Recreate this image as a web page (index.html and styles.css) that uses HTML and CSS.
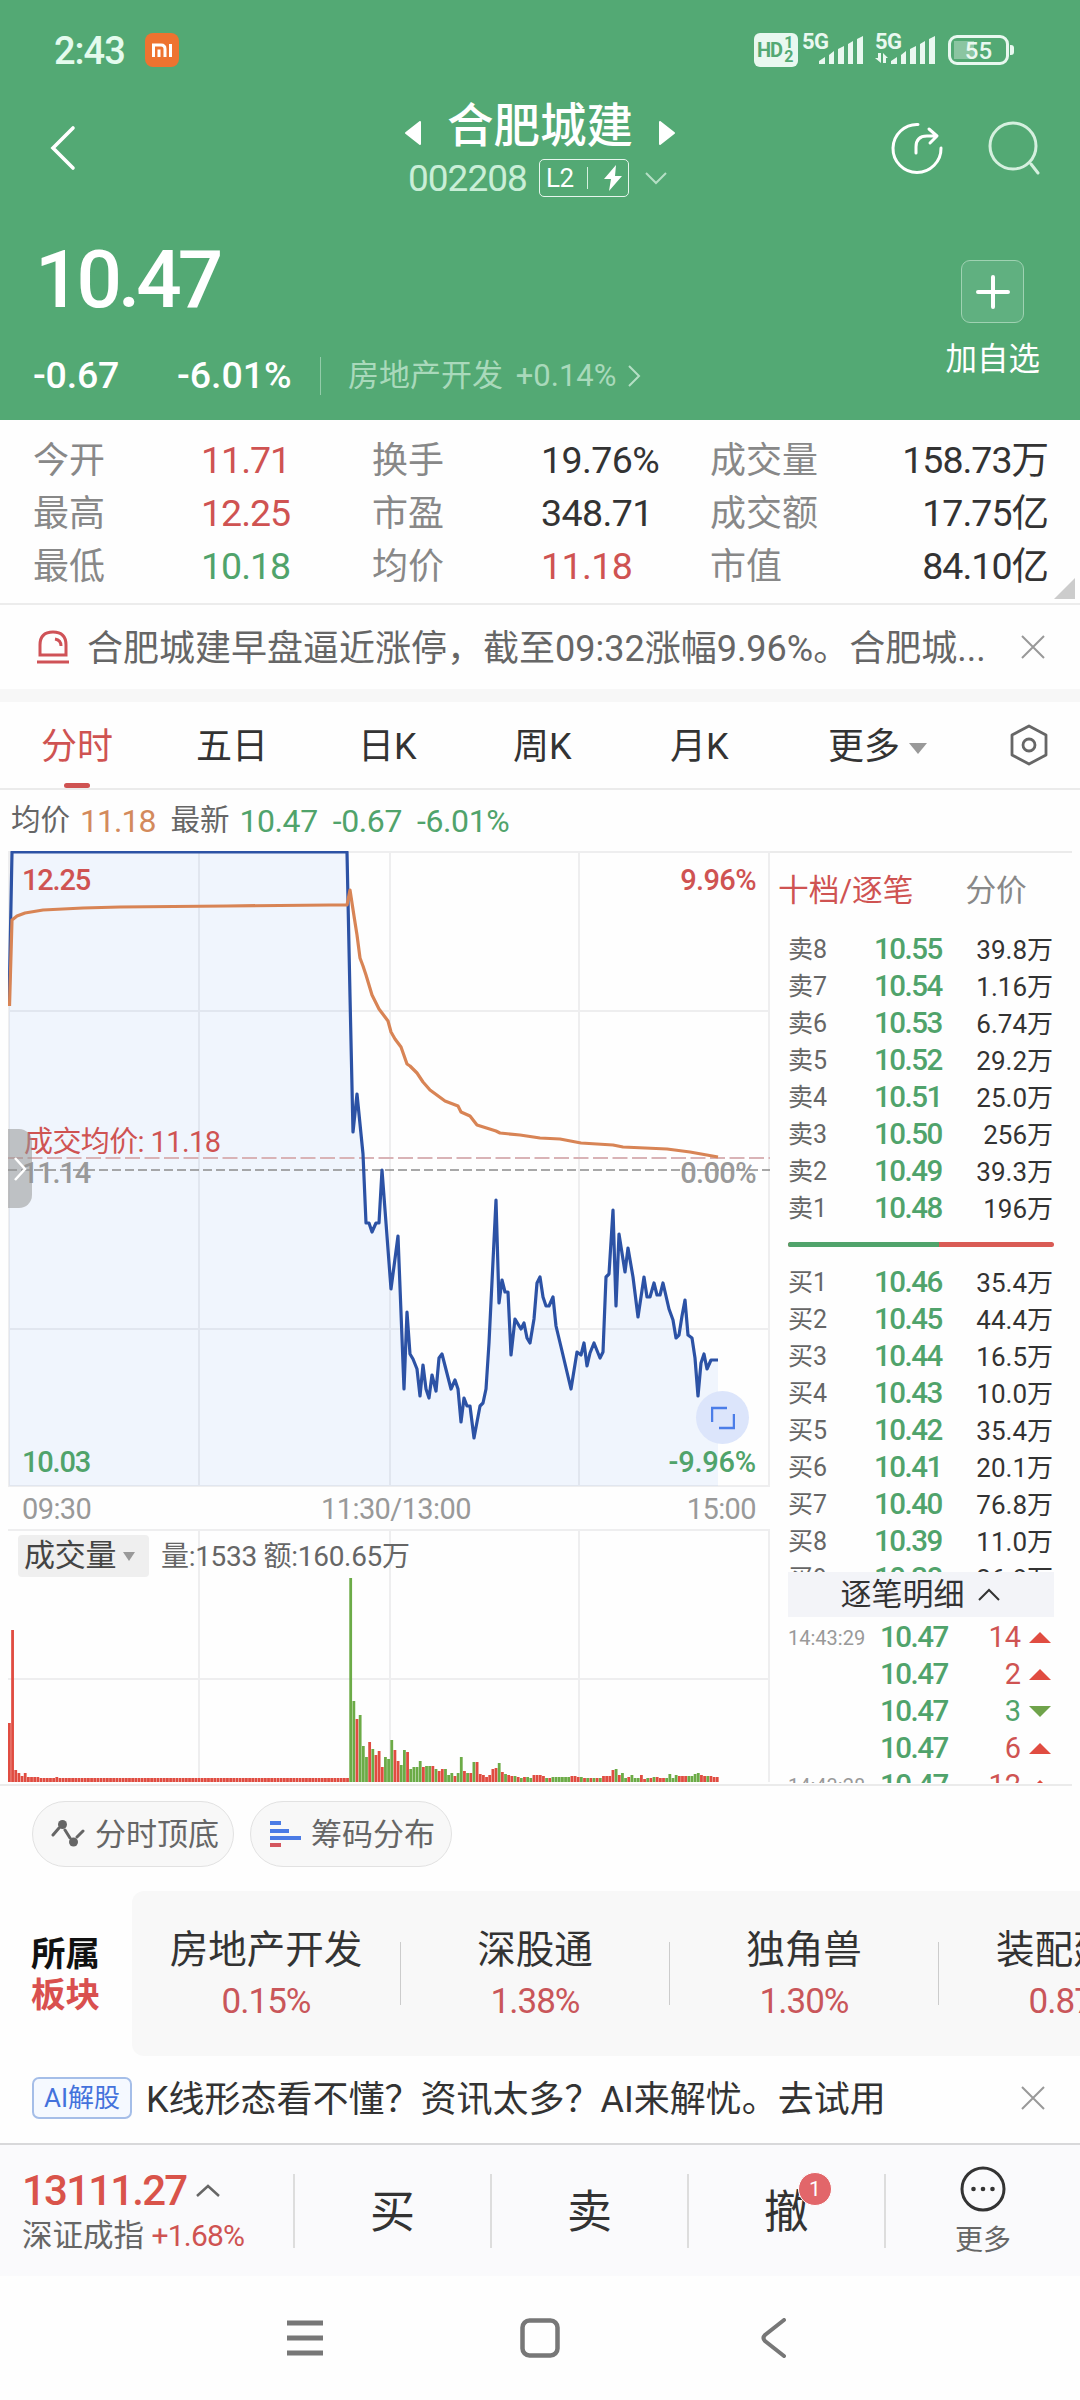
FILE: index.html
```html
<!DOCTYPE html>
<html lang="zh-CN">
<head>
    <meta charset="UTF-8">
    <meta name="viewport" content="width=device-width, initial-scale=1.0">
    <title>合肥城建 002208</title>
    <link rel="stylesheet" href="styles.css">
</head>
<body>
    <header class="header">
        <div class="status-bar">
            <span class="clock">2:43</span>
            <svg class="mi" width="34" height="34" viewBox="0 0 34 34">
                <rect width="34" height="34" rx="8" fill="#ee7330"/>
                <path d="M8.500 24V12h7.500q4 0 4 4v8M14 16.500V24M25.500 11v13" fill="none" stroke="#fff" stroke-width="3"/>
            </svg>
            <span class="hd">HD<small><i>1</i><i>2</i></small></span>
            <div class="signal">
                <b>5G</b>
                <svg width="60" height="32" viewBox="0 0 60 32">
                    <path d="M15 30v-3l6-4v7zM25 30V21l5-4v13zM34 30V15l6-3v18zM44 30V10l5-3v23zM53 30V5l6-3v28z"/>
                </svg>
            </div>
            <div class="signal signal-2">
                <b>5G</b>
                <svg width="60" height="32" viewBox="0 0 60 32">
                    <path d="M15 30v-3l6-4v7zM25 30V21l5-4v13zM34 30V15l6-3v18zM44 30V10l5-3v23zM53 30V5l6-3v28z"/>
                    <path d="M-1 24h3v-5h3v10zM7 19l5 5h-2v5H7z"/>
                </svg>
            </div>
            <div class="battery"><span>55</span></div>
        </div>

        <div class="title-bar">
            <svg class="back" width="28" height="48" viewBox="0 0 28 48"><path d="M24 4 4 24l20 20" fill="none" stroke="#fff" stroke-width="3.600" stroke-linecap="round"/></svg>
            <div class="stock">
                <div class="stock-name">
                    <svg width="16" height="24" viewBox="0 0 16 24"><path d="M15 1v22L1 12z" fill="#fff" stroke="#fff" stroke-width="2" stroke-linejoin="round"/></svg>
                    <span>合肥城建</span>
                    <svg width="16" height="24" viewBox="0 0 16 24"><path d="M1 1v22L15 12z" fill="#fff" stroke="#fff" stroke-width="2" stroke-linejoin="round"/></svg>
                </div>
                <div class="stock-code">
                    <span class="num">002208</span>
                    <span class="level">L2<i></i><svg width="18" height="26" viewBox="0 0 18 26"><path d="M12 0 0 14h7L5 26 18 11h-7z" fill="#fff"/></svg></span>
                    <svg width="22" height="14" viewBox="0 0 22 14"><path d="m1 2 10 10L21 2" fill="none" stroke="#b5dfc5" stroke-width="2"/></svg>
                </div>
            </div>
            <div class="tools">
                <svg width="54" height="54" viewBox="0 0 54 54" fill="none" stroke="#fff" stroke-width="3" stroke-linecap="round" stroke-linejoin="round">
                    <path d="M28 3.500A24 24 0 1 0 51 27M26 32v-6q0-11 11-11h9M39 8l8 7-7 7"/>
                </svg>
                <svg width="54" height="54" viewBox="0 0 54 54" fill="none" stroke="#d5f0df" stroke-width="3" stroke-linecap="round">
                    <circle cx="25" cy="25" r="23"/><path d="m43 43 7 9"/>
                </svg>
            </div>
        </div>

        <div class="quote">
            <div>
                <div class="price">10.47</div>
                <div class="change">
                    <span class="change-abs">-0.67</span>
                    <span class="change-pct">-6.01%</span>
                    <span class="industry">房地产开发 <em>+0.14%</em></span>
                    <svg width="14" height="24" viewBox="0 0 14 24"><path d="m2 2 10 10L2 22" fill="none" stroke="#b5dfc5" stroke-width="2"/></svg>
                </div>
            </div>
            <div class="add">
                <div class="add-box"><svg width="34" height="34" viewBox="0 0 34 34"><path d="M17 2v30M2 17h30" stroke="#fff" stroke-width="4" stroke-linecap="round"/></svg></div>
                <span>加自选</span>
            </div>
        </div>
    </header>

    <section class="stats">
        <span>今开</span><b class="up">11.71</b><span>换手</span><b>19.76%</b><span>成交量</span><b>158.73万</b>
        <span>最高</span><b class="up">12.25</b><span>市盈</span><b>348.71</b><span>成交额</span><b>17.75亿</b>
        <span>最低</span><b class="down">10.18</b><span>均价</span><b class="up">11.18</b><span>市值</span><b>84.10亿</b>
        <div class="corner"></div>
    </section>

    <section class="notice">
        <svg width="32" height="34" viewBox="0 0 32 34" fill="none" stroke="#cf5257" stroke-width="3">
            <path d="M3 25V15Q3 2 16 2t13 13v10zM0 32h32M18 9q6 1 6 7"/>
        </svg>
        <p>合肥城建早盘逼近涨停，截至09:32涨幅9.96%。合肥城...</p>
        <svg class="close" width="24" height="24" viewBox="0 0 24 24"><path d="m1 1 22 22M23 1 1 23" stroke="#999" stroke-width="2"/></svg>
    </section>

    <nav class="tabs">
        <a class="active">分时</a>
        <a>五日</a>
        <a>日K</a>
        <a>周K</a>
        <a>月K</a>
        <a class="tab-more">更多 <i class="caret"></i></a>
        <svg width="40" height="42" viewBox="0 0 40 42" fill="none" stroke="#666" stroke-width="2.800">
            <path d="M20 2 37 11v20L20 40 3 31V11z" stroke-linejoin="round"/><circle cx="20" cy="21" r="6"/>
        </svg>
    </nav>

    <div class="legend">
        <span>均价</span><b class="avg">11.18</b><span>最新</span><b class="down">10.47</b><b class="down">-0.67</b><b class="down">-6.01%</b>
    </div>

    <main class="market">
        <div class="charts">
            <div class="price-chart">
                <svg width="762" height="636" viewBox="0 0 762 636">
                    <path class="grid" d="M1 1h760v634H1zM191 1v634M382 1v634M571 1v634M1 160h760M1 478h760"/>
                    <polygon id="price-area" class="area"/>
                    <path class="avg-level" d="M0 307h762"/>
                    <path class="zero-level" d="M0 319h762"/>
                    <polyline id="price-line" class="line" points="1,155 4,1 339,1 342,145 345,281 349,243 355,303 358,372 361,372 364,381 368,372 371,372 374,319 383,438 390,385 396,538 399,461 402,503 405,508 409,518 412,545 415,514 418,538 421,547 424,524 428,540 431,507 434,503 443,538 447,529 450,538 453,571 456,547 459,555 462,555 466,587 472,555 475,552 478,538 481,492 488,349 491,452 494,429 497,441 500,441 503,504 507,468 513,478 516,472 519,487 522,492 526,468 529,432 532,426 535,446 538,455 541,455 545,446 548,475 554,500 563,538 569,501 573,504 576,492 579,515 582,502 586,492 592,507 595,501 598,426 601,423 605,359 608,455 611,383 617,421 620,397 625,426 630,466 636,426 639,446 642,446 646,432 649,444 652,444 655,432 661,458 665,469 668,487 671,484 674,465 677,449 680,484 684,487 687,507 690,545 693,512 696,503 699,518 703,509 710,509"/>
                    <polyline class="line line-avg" points="1.500,155 4,69 9,65 17,62 35,59 75,57 112,56 219,55 322,54 339,54 342,39 346,65 349,84 352,107 355,115 358,124 364,144 371,158 374,162 380,170 383,181 387,188 393,196 399,213 402,215 409,222 415,231 422,239 437,250 450,255 453,261 462,265 469,274 488,280 492,282 512,284 532,287 552,288 573,292 605,294 615,296 659,298 682,301 710,306"/>
                </svg>
                <span class="tag tag-high up">12.25</span>
                <span class="tag tag-high-pct up">9.96%</span>
                <span class="tag tag-avg up">成交均价: 11.18</span>
                <span class="tag tag-zero">11.14</span>
                <span class="tag tag-zero-pct">0.00%</span>
                <span class="tag tag-low down">10.03</span>
                <span class="tag tag-low-pct down">-9.96%</span>
                <div class="drawer"><svg width="14" height="26" viewBox="0 0 14 26"><path d="m2 2 10 11L2 24" fill="none" stroke="#fff" stroke-width="2.500"/></svg></div>
                <div class="expand"><svg width="24" height="24" viewBox="0 0 24 24"><path d="M1 16V2h15M8 22h15V8" fill="none" stroke="#4b7de8" stroke-width="2.500"/></svg></div>
            </div>
            <div class="times"><span>09:30</span><span>11:30/13:00</span><span>15:00</span></div>
            <div class="volume">
                <svg id="volume-bars" width="762" height="254" viewBox="0 0 762 254">
                    <path class="grid" d="M0 1h761v252M191 1v252M382 1v252M571 1v252M0 150h761"/>
                </svg>
                <div class="volume-head">
                    <span class="volume-select">成交量 <i class="caret"></i></span>
                    <span class="volume-text">量:1533 额:160.65万</span>
                </div>
            </div>
        </div>

        <aside class="book">
            <div class="book-tabs"><span class="up">十档/逐笔</span><span>分价</span></div>
            <div class="orders">
                <div class="order"><span>卖8</span><b>10.55</b><em>39.8万</em></div>
                <div class="order"><span>卖7</span><b>10.54</b><em>1.16万</em></div>
                <div class="order"><span>卖6</span><b>10.53</b><em>6.74万</em></div>
                <div class="order"><span>卖5</span><b>10.52</b><em>29.2万</em></div>
                <div class="order"><span>卖4</span><b>10.51</b><em>25.0万</em></div>
                <div class="order"><span>卖3</span><b>10.50</b><em>256万</em></div>
                <div class="order"><span>卖2</span><b>10.49</b><em>39.3万</em></div>
                <div class="order"><span>卖1</span><b>10.48</b><em>196万</em></div>
                <div class="ratio"><i></i></div>
                <div class="order"><span>买1</span><b>10.46</b><em>35.4万</em></div>
                <div class="order"><span>买2</span><b>10.45</b><em>44.4万</em></div>
                <div class="order"><span>买3</span><b>10.44</b><em>16.5万</em></div>
                <div class="order"><span>买4</span><b>10.43</b><em>10.0万</em></div>
                <div class="order"><span>买5</span><b>10.42</b><em>35.4万</em></div>
                <div class="order"><span>买6</span><b>10.41</b><em>20.1万</em></div>
                <div class="order"><span>买7</span><b>10.40</b><em>76.8万</em></div>
                <div class="order"><span>买8</span><b>10.39</b><em>11.0万</em></div>
                <div class="order"><span>买9</span><b>10.38</b><em>26.8万</em></div>
            </div>
            <div class="ticks-head">逐笔明细 <svg width="22" height="14" viewBox="0 0 22 14"><path d="m1 12 10-10 10 10" fill="none" stroke="#333" stroke-width="2"/></svg></div>
            <div class="ticks">
                <div class="tick"><span>14:43:29</span><b>10.47</b><em class="up">14</em><i class="tri-up"></i></div>
                <div class="tick"><span></span><b>10.47</b><em class="up">2</em><i class="tri-up"></i></div>
                <div class="tick"><span></span><b>10.47</b><em class="down">3</em><i class="tri-down"></i></div>
                <div class="tick"><span></span><b>10.47</b><em class="up">6</em><i class="tri-up"></i></div>
                <div class="tick"><span>14:43:28</span><b>10.47</b><em class="up">12</em><i class="tri-up"></i></div>
            </div>
        </aside>
    </main>

    <div class="pills">
        <span class="pill">
            <svg width="34" height="28" viewBox="0 0 34 28"><path d="M2 15 8 8M14 10l5 8M26 17l6-6" fill="none" stroke="#666" stroke-width="3" stroke-linecap="round"/><circle cx="11.500" cy="4.500" r="4.500" fill="#666"/><circle cx="22.500" cy="22" r="4.500" fill="#666"/></svg>
            分时顶底
        </span>
        <span class="pill">
            <svg width="32" height="28" viewBox="0 0 32 28" stroke-width="4"><path d="M1 3h11M1 11h19M1 18h31" stroke="#4b7be5"/><path d="M1 25h11" stroke="#d4565e"/></svg>
            筹码分布
        </span>
    </div>

    <section class="sectors">
        <h2>所属<br><span>板块</span></h2>
        <div class="sector-list">
            <div class="sector"><span>房地产开发</span><b>0.15%</b></div>
            <div class="sector"><span>深股通</span><b>1.38%</b></div>
            <div class="sector"><span>独角兽</span><b>1.30%</b></div>
            <div class="sector"><span>装配建筑</span><b>0.87%</b></div>
        </div>
    </section>

    <section class="ai">
        <span class="ai-tag">AI解股</span>
        <p>K线形态看不懂？资讯太多？AI来解忧。去试用</p>
        <svg class="close" width="24" height="24" viewBox="0 0 24 24"><path d="m1 1 22 22M23 1 1 23" stroke="#999" stroke-width="2"/></svg>
    </section>

    <footer class="trade-bar">
        <div class="index">
            <div class="index-value">13111.27 <svg width="24" height="14" viewBox="0 0 24 14"><path d="m1 12 11-10 11 10" fill="none" stroke="#666" stroke-width="2.500"/></svg></div>
            <div class="index-name">深证成指 <b>+1.68%</b></div>
        </div>
        <div class="action">买</div>
        <div class="action">卖</div>
        <div class="action"><span class="cancel">撤<i class="badge">1</i></span></div>
        <div class="more">
            <svg width="46" height="46" viewBox="0 0 46 46"><circle cx="23" cy="23" r="21" fill="none" stroke="#333" stroke-width="3"/><circle cx="13.500" cy="23" r="2.300" fill="#333"/><circle cx="23" cy="23" r="2.300" fill="#333"/><circle cx="32.500" cy="23" r="2.300" fill="#333"/></svg>
            <span>更多</span>
        </div>
    </footer>

    <div class="system-nav">
        <svg width="38" height="38" viewBox="0 0 38 38"><path d="M1 4h36M1 19h36M1 34h36" stroke="#777" stroke-width="5"/></svg>
        <svg width="40" height="40" viewBox="0 0 40 40"><rect x="2.500" y="2.500" width="35" height="35" rx="7" fill="none" stroke="#777" stroke-width="4.500"/></svg>
        <svg width="28" height="40" viewBox="0 0 28 40"><path d="M24 2 5 17q-3 3 0 6l19 15" fill="none" stroke="#777" stroke-width="4" stroke-linecap="round"/></svg>
    </div>

    <script>
        // Volume per minute, negative = falling minute (green)
        const open = [59, 152, 12, 9, 6, 9, 5, 5, 5, 5, 4, 4, 4, 4, 4, 5];
        const limitUp = new Array(92).fill(4);
        const afterBreak = [
            -204, -81, 63, -67, -36, -25, 40, -33, 27, 31, 15, -25, -23, -42, 32, 21, -17, -32, 30, -13,
            -15, -15, -21, 15, -16, -16, 16, -13, 11, 13, -13, -7, -9, 6, -9, -25, 11, -9, 9, -20,
            20, 8, 7, 5, 7, 13, 14, -19, 10, -8, 7, 6, -6, 5, -4, 5, -5, -4, 7, 7,
            7, 6, -4, 4, -5, -5, -5, -5, -5, -5, 6, 6, 5, -5, 4, -4, 4, -4, 4, -4,
            6, 6, 6, 12, -13, 7, -9, -4, 5, -7, -4, -4, 7, 3, -4, 4, -5, 5, 4, 4,
            -4, -8, -4, -7, 6, 6, 6, -6, -6, -8, -9, 7, 6, -6, 6, 5, 5
        ];
        const bars = document.getElementById('volume-bars');
        open.concat(limitUp, afterBreak).forEach((v, i) => {
            const rect = document.createElementNS('http://www.w3.org/2000/svg', 'rect');
            const h = Math.abs(v);
            rect.setAttribute('x', (i * 3.16).toFixed(2));
            rect.setAttribute('y', 253 - h);
            rect.setAttribute('width', 2.8);
            rect.setAttribute('height', h);
            rect.setAttribute('fill', v < 0 ? '#6cab47' : '#e04c41');
            bars.appendChild(rect);
        });

        // Fill under the price line
        const line = document.getElementById('price-line').getAttribute('points');
        document.getElementById('price-area').setAttribute('points', line + ' 710,635 1,635');
    </script>
</body>
</html>
```
FILE: styles.css
```css
* {
    box-sizing: border-box;
}
body {
    margin: 0;
    width: 1080px;
    height: 2400px;
    overflow: hidden;
    background: #fefefe;
    color: #333;
    font-family: Roboto, "Noto Sans CJK SC", sans-serif;
    line-height: 1;
}
svg {
    display: block;
    flex: none;
}
p, h2 {
    margin: 0;
}
i, em {
    font-style: normal;
}
b {
    font-weight: 400;
}
.up {
    color: #cf5352;
}
.down {
    color: #50a36b;
}

/* Header */
.header {
    height: 420px;
    background: #53a974;
    color: #fff;
}
.status-bar {
    display: flex;
    align-items: center;
    height: 100px;
    padding: 0 66px 0 54px;
}
.clock {
    width: 91px;
    padding-top: 2px;
    font-size: 38px;
    letter-spacing: -1px;
    font-weight: 500;
    color: #e4fbee;
}
.mi {
    margin-right: auto;
}
.hd {
    display: flex;
    align-items: center;
    width: 44px;
    height: 34px;
    padding-left: 3px;
    margin-right: 6px;
    border-radius: 6px;
    background: #e9f8f0;
    color: #53a974;
    font-size: 20px;
    font-weight: 700;
    letter-spacing: -1px;
}
.hd small {
    display: grid;
    margin-left: 2px;
    font-size: 16px;
    line-height: 14px;
}
.signal {
    position: relative;
    margin-right: 12px;
    fill: #e9f8f0;
}
.signal svg {
    overflow: visible;
}
.signal b {
    position: absolute;
    top: -3px;
    left: -2px;
    color: #e9f8f0;
    font-size: 22px;
    font-weight: 700;
    letter-spacing: -0.5px;
}
.signal-2 b {
    left: -1px;
}
.battery {
    position: relative;
    width: 61px;
    height: 30px;
    margin-right: 5px;
    border: 3px solid #e9f8f0;
    border-radius: 9px;
    background: linear-gradient(90deg, #8bc5a1 20px, transparent 20px) 3px 3px no-repeat;
    background-size: 48px 18px;
    color: #e9f8f0;
    font-size: 24px;
    font-weight: 500;
    line-height: 26px;
    text-align: center;
}
.battery::after {
    content: "";
    position: absolute;
    top: 7px;
    right: -8px;
    width: 4px;
    height: 10px;
    border-radius: 0 3px 3px 0;
    background: #e9f8f0;
}
.title-bar {
    display: grid;
    grid-template-columns: 160px 1fr 160px;
    height: 96px;
    padding: 0 34px 0 48px;
}
.back {
    margin: 24px 0 0 1px;
}
.stock {
    padding-right: 14px;
}
.stock-name {
    display: flex;
    align-items: center;
    justify-content: center;
    gap: 26px;
    height: 50px;
    padding-top: 2px;
    font-size: 46.5px;
    font-weight: 500;
}
.stock-name svg {
    margin-top: 13px;
}
.stock-code {
    display: flex;
    align-items: center;
    height: 37px;
    margin: 9px 0 0 200px;
}
.num {
    width: 131px;
    padding-top: 2px;
    color: #c9eed7;
    font-size: 37px;
    letter-spacing: -1px;
}
.level {
    display: flex;
    align-items: center;
    width: 90px;
    height: 38px;
    padding: 0 8px 0 6px;
    margin-right: 16px;
    border: 1.5px solid #e6f6ed;
    border-radius: 5px;
    font-size: 26px;
    letter-spacing: -0.5px;
}
.level i {
    flex: none;
    width: 1px;
    height: 22px;
    margin: 0 16px 0 13px;
    background: #d5f0df;
}
.tools {
    display: flex;
    gap: 44px;
    margin: 21px 0 0 4px;
}
.quote {
    display: flex;
    justify-content: space-between;
    padding: 0 40px 0 33px;
}
.price {
    margin: 44px 0 0 2px;
    font-size: 80px;
    font-weight: 500;
    letter-spacing: -4px;
}
.change {
    display: flex;
    align-items: center;
    height: 38px;
    margin-top: 37px;
    font-size: 37.5px;
    font-weight: 500;
}
.change-abs {
    width: 144px;
    letter-spacing: -0.2px;
}
.change-pct {
    width: 143px;
}
.industry {
    width: 307px;
    padding-left: 27px;
    border-left: 1px solid #93cca9;
    color: #a9d9bb;
    font-size: 31px;
    font-weight: 400;
    line-height: 38px;
    white-space: nowrap;
}
.industry em {
    margin-left: 5px;
}
.add {
    display: flex;
    flex-direction: column;
    align-items: center;
    font-size: 31.5px;
}
.add-box {
    display: grid;
    place-items: center;
    width: 63px;
    height: 63px;
    margin: 64px 0 21px;
    border: 1.5px solid #9fd2b2;
    border-radius: 9px;
    background: #60b080;
}

/* Key figures */
.stats {
    position: relative;
    display: grid;
    grid-template-columns: 168px 171px 169px 169px 150px 1fr;
    grid-auto-rows: 53px;
    align-items: center;
    height: 185px;
    padding: 14px 32px 0 33px;
    border-bottom: 2px solid #ececec;
    font-size: 36px;
}
.stats span {
    color: #888;
}
.stats b {
    letter-spacing: -1px;
    font-size: 37.5px;
}
.stats b:nth-of-type(3n) {
    text-align: right;
}
.stats b:nth-of-type(3n + 2) {
    letter-spacing: -0.6px;
}
.corner {
    position: absolute;
    right: 5px;
    bottom: 4px;
    width: 21px;
    height: 21px;
    background: #ccc;
    clip-path: polygon(100% 0, 100% 100%, 0 100%);
}
.notice {
    display: flex;
    align-items: center;
    height: 97px;
    padding: 0 35px 0 37px;
    border-bottom: 13px solid #f7f7f7;
    color: #666;
    font-size: 36px;
}
.notice p {
    padding-top: 3px;
    margin-left: 18px;
    white-space: nowrap;
}
.close {
    margin-left: auto;
}

/* Tabs */
.tabs {
    display: grid;
    grid-template-columns: 155px 162px 155px 157px 158px 181px 40px;
    align-items: center;
    justify-content: start;
    height: 88px;
    padding-left: 41px;
    border-bottom: 2px solid #ebebeb;
    color: #333;
    font-size: 36px;
}
.tabs a {
    position: relative;
    line-height: 90px;
    height: 86px;
    white-space: nowrap;
}
.tabs .active {
    color: #cf5352;
}
.active::after {
    content: "";
    position: absolute;
    left: 23px;
    bottom: 0;
    width: 26px;
    height: 5px;
    border-radius: 3px;
    background: #cf5352;
}
.caret {
    display: inline-block;
    border: 9px solid transparent;
    border-top: 11px solid #999;
    border-bottom: 0;
    vertical-align: 5px;
}
.legend {
    display: flex;
    align-items: center;
    height: 61px;
    padding-left: 11px;
    color: #666;
    font-size: 29.5px;
}
.legend b {
    margin: 0 15px 0 10px;
    font-size: 32px;
    letter-spacing: -1px;
}
.legend .down {
    letter-spacing: -0.4px;
}
.legend b + b {
    margin-left: 0;
}
.legend .avg {
    color: #d38a5c;
}

/* Charts */
.market {
    display: flex;
    height: 935px;
    width: 1072px;
    padding-left: 8px;
    border-bottom: 2px solid #ebebeb;
}
.charts {
    width: 762px;
}
.price-chart {
    position: relative;
    height: 636px;
}
.grid {
    fill: none;
    stroke: #eeeeef;
    stroke-width: 2;
}
.area {
    fill: rgba(100, 155, 245, 0.09);
}
.line {
    fill: none;
    stroke: #2c52a5;
    stroke-width: 3.2;
    stroke-linejoin: round;
}
.line-avg {
    stroke: #d88455;
}
.avg-level {
    stroke: #d9b3b6;
    stroke-width: 2;
    stroke-dasharray: 15 4.5;
}
.zero-level {
    stroke: #8c8c8c;
    stroke-width: 1.6;
    stroke-dasharray: 9 4;
}
.tag {
    position: absolute;
    font-size: 29px;
    font-weight: 500;
    letter-spacing: -1.2px;
}
.tag-high {
    top: 15px;
    left: 14px;
}
.tag-high-pct {
    top: 15px;
    right: 14px;
    letter-spacing: -0.6px;
}
.tag-avg {
    top: 277px;
    left: 16px;
    font-weight: 400;
    letter-spacing: -0.6px;
}
.tag-zero {
    top: 308px;
    left: 14px;
    color: #999;
}
.tag-zero-pct {
    top: 308px;
    right: 14px;
    color: #999;
    letter-spacing: -0.6px;
}
.tag-low {
    bottom: 10px;
    left: 14px;
}
.tag-low-pct {
    bottom: 10px;
    right: 14px;
    letter-spacing: -0.2px;
}
.drawer {
    position: absolute;
    top: 278px;
    left: 0;
    display: grid;
    place-items: center;
    width: 24px;
    height: 79px;
    border-radius: 0 13px 13px 0;
    background: rgba(150, 150, 150, 0.55);
}
.expand {
    position: absolute;
    right: 21px;
    bottom: 43px;
    display: grid;
    place-items: center;
    width: 53px;
    height: 53px;
    border-radius: 50%;
    background: #dce5fb;
}
.times {
    display: flex;
    justify-content: space-between;
    height: 42px;
    padding: 0 14px;
    color: #999;
    font-size: 29px;
    line-height: 44px;
    letter-spacing: -0.6px;
}
.times span:nth-child(2) {
    margin-left: 14px;
}
.volume {
    position: relative;
}
.volume-head {
    position: absolute;
    top: 6px;
    left: 10px;
    display: flex;
    align-items: center;
    gap: 12px;
    color: #666;
    font-size: 28px;
    letter-spacing: -0.3px;
}
.volume-text {
    padding-top: 2px;
}
.volume-select {
    width: 131px;
    height: 42px;
    padding-left: 6px;
    border-radius: 4px;
    background: #efefef;
    color: #444;
    font-size: 31px;
    line-height: 42px;
    white-space: nowrap;
}
.volume-select .caret {
    margin-left: -1px;
    border-width: 9px 6.5px 0;
}

/* Order book */
.book {
    flex: 1;
    padding-left: 8px;
    border-top: 2px solid #ebebeb;
}
.book-tabs {
    display: flex;
    gap: 52px;
    height: 78px;
    color: #888;
    font-size: 30.7px;
    line-height: 76px;
}
.orders {
    height: 641px;
    padding-left: 10px;
    overflow: hidden;
}
.order {
    display: grid;
    grid-template-columns: 86px 90px 89px;
    align-items: center;
    height: 37px;
    color: #666;
    font-size: 25px;
}
.order b, .tick b {
    color: #50a36b;
    font-size: 29.5px;
    font-weight: 500;
    letter-spacing: -1.5px;
}
.order em {
    color: #333;
    font-size: 26px;
    text-align: right;
    white-space: nowrap;
}
.ratio {
    display: flex;
    height: 5px;
    width: 266px;
    margin: 15px 0 17px 0;
    border-radius: 3px;
    background: #d95b55;
}
.ratio i {
    width: 151px;
    border-radius: 3px 0 0 3px;
    background: #50a36b;
}
.ticks-head {
    display: flex;
    align-items: center;
    justify-content: center;
    gap: 13px;
    width: 266px;
    height: 45px;
    padding-right: 2px;
    margin-left: 10px;
    background: #f3f4f8;
    font-size: 31px;
}
.ticks {
    height: 166px;
    padding: 2px 0 0 10px;
    overflow: hidden;
}
.tick {
    display: grid;
    grid-template-columns: 92px 80px 61px 30px;
    align-items: center;
    height: 37px;
    font-size: 20px;
    color: #999;
}
.tick em {
    font-size: 29px;
    text-align: right;
}
.tri-up, .tri-down {
    justify-self: end;
    border: 11px solid transparent;
}
.tri-up {
    border-top: 0;
    border-bottom-color: #e04c41;
}
.tri-down {
    border-bottom: 0;
    border-top-color: #6fa34b;
}

/* Pills, sectors, hint */
.pills {
    display: flex;
    gap: 16px;
    padding: 15px 32px 24px;
}
.pill {
    display: flex;
    align-items: center;
    gap: 10px;
    width: 202px;
    height: 66px;
    padding-left: 18px;
    border: 1px solid #e2e2e2;
    border-radius: 33px;
    background: #f8f8f8;
    color: #666;
    font-size: 31px;
    white-space: nowrap;
}
.sectors {
    display: flex;
    align-items: center;
    height: 165px;
}
.sectors h2 {
    width: 132px;
    flex: none;
    padding: 2px 0 0 31px;
    color: #111;
    font-size: 34.5px;
    font-weight: 700;
    line-height: 41px;
}
.sectors h2 span {
    color: #d9504f;
}
.sector-list {
    display: flex;
    align-items: center;
    width: 948px;
    height: 165px;
    overflow: hidden;
    border-radius: 12px 0 0 12px;
    background: #f8f8f8;
}
.sector {
    display: flex;
    flex: 0 0 269px;
    flex-direction: column;
    align-items: center;
    justify-content: center;
    gap: 14px;
    height: 63px;
    padding-top: 3px;
    border-right: 1px solid #ccc;
    font-size: 38.5px;
}
.sector b {
    color: #c9565a;
    font-size: 35px;
    letter-spacing: -1px;
}
.ai {
    display: flex;
    align-items: center;
    height: 87px;
    padding: 0 35px 3px 32px;
    font-size: 36px;
}
.ai p {
    padding-top: 3px;
}
.ai-tag {
    width: 100px;
    height: 42px;
    margin-right: 14px;
    border: 2px solid #a5bee8;
    border-radius: 7px;
    background: #f5f9ff;
    color: #4472dc;
    font-size: 26px;
    line-height: 39px;
    text-align: center;
}

/* Bottom bar */
.trade-bar {
    display: flex;
    align-items: center;
    height: 133px;
    border-top: 2px solid #d8d8da;
    background: #fafafc;
}
.index {
    width: 293px;
    padding-left: 22px;
}
.index-value {
    display: flex;
    align-items: center;
    gap: 10px;
    color: #d9534a;
    font-size: 42px;
    font-weight: 500;
    letter-spacing: -1.8px;
}
.index-name {
    margin-top: 9px;
    color: #666;
    font-size: 30.5px;
    white-space: nowrap;
}
.index-name b {
    color: #cf5352;
    font-size: 30px;
    letter-spacing: -0.8px;
}
.action {
    display: grid;
    place-items: center;
    width: 197px;
    height: 74px;
    padding-top: 3px;
    border-left: 2px solid #ddd;
    font-size: 45px;
}
.cancel {
    position: relative;
}
.badge {
    position: absolute;
    top: -18px;
    right: -23px;
    width: 34px;
    height: 34px;
    border: 1px solid #fff;
    border-radius: 50%;
    background: #e2666a;
    color: #fff;
    font-size: 21px;
    line-height: 33px;
    text-align: center;
}
.more {
    display: flex;
    flex: 1;
    flex-direction: column;
    align-items: center;
    justify-content: center;
    gap: 15px;
    height: 74px;
    border-left: 2px solid #ddd;
    color: #666;
    font-size: 28px;
}
.system-nav {
    display: flex;
    align-items: center;
    padding: 42px 0 0 286px;
}
.system-nav svg:nth-child(2) {
    margin: 0 200px 0 196px;
}
```
